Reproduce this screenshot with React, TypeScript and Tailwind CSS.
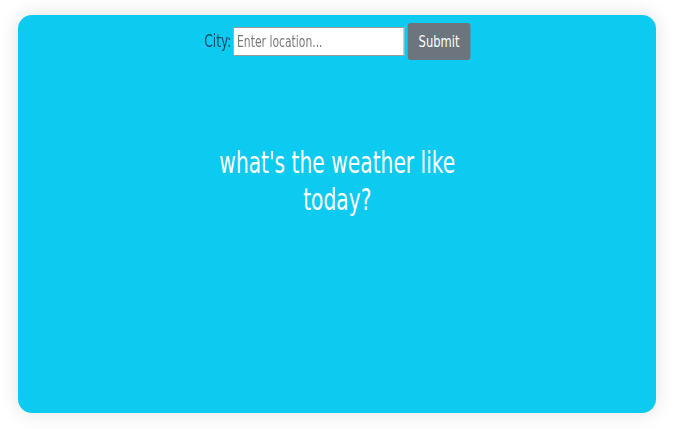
import React, { useState } from 'react';

// Oswald isn't installed; DejaVu Sans Condensed squeezed horizontally stands in for it
const font = { fontFamily: '"DejaVu Sans Condensed", "DejaVu Sans", sans-serif' };

const App: React.FC = () => {
  const [city, setCity] = useState('');

  return (
    <div className="min-h-[429px] w-[681px] bg-white pt-[15px] pl-[18px]" style={font}>
      <div className="w-[638px] h-[398px] bg-[#0dcaf0] rounded-[14px] shadow-[0_0_20px_rgba(0,0,0,0.12)] flex flex-col items-center">
        <form
          className="flex items-center mt-[8px] scale-x-[0.8]"
          onSubmit={(e) => e.preventDefault()}
        >
          <label className="text-[17px] text-[#0f4a66] mr-[2px] pt-[1px]">City:</label>
          <input
            value={city}
            onChange={(e) => setCity(e.target.value)}
            placeholder="Enter location..."
            className="w-[214px] h-[29px] bg-white border border-[#9a9a9a] px-[4px] pt-[1px] text-[15px] text-[#333] placeholder:text-[#7a7a7a] outline-none"
          />
          <button
            type="submit"
            className="ml-[4px] w-[79px] h-[37px] bg-[#6c757d] text-white text-[16px] pt-[1px] rounded-[4px]"
          >
            Submit
          </button>
        </form>
        <h1 className="mt-[84px] text-center text-white text-[30px] leading-[37px] font-normal scale-x-[0.75]">
          what's the weather like
          <br />
          today?
        </h1>
      </div>
    </div>
  );
};

export default App;
